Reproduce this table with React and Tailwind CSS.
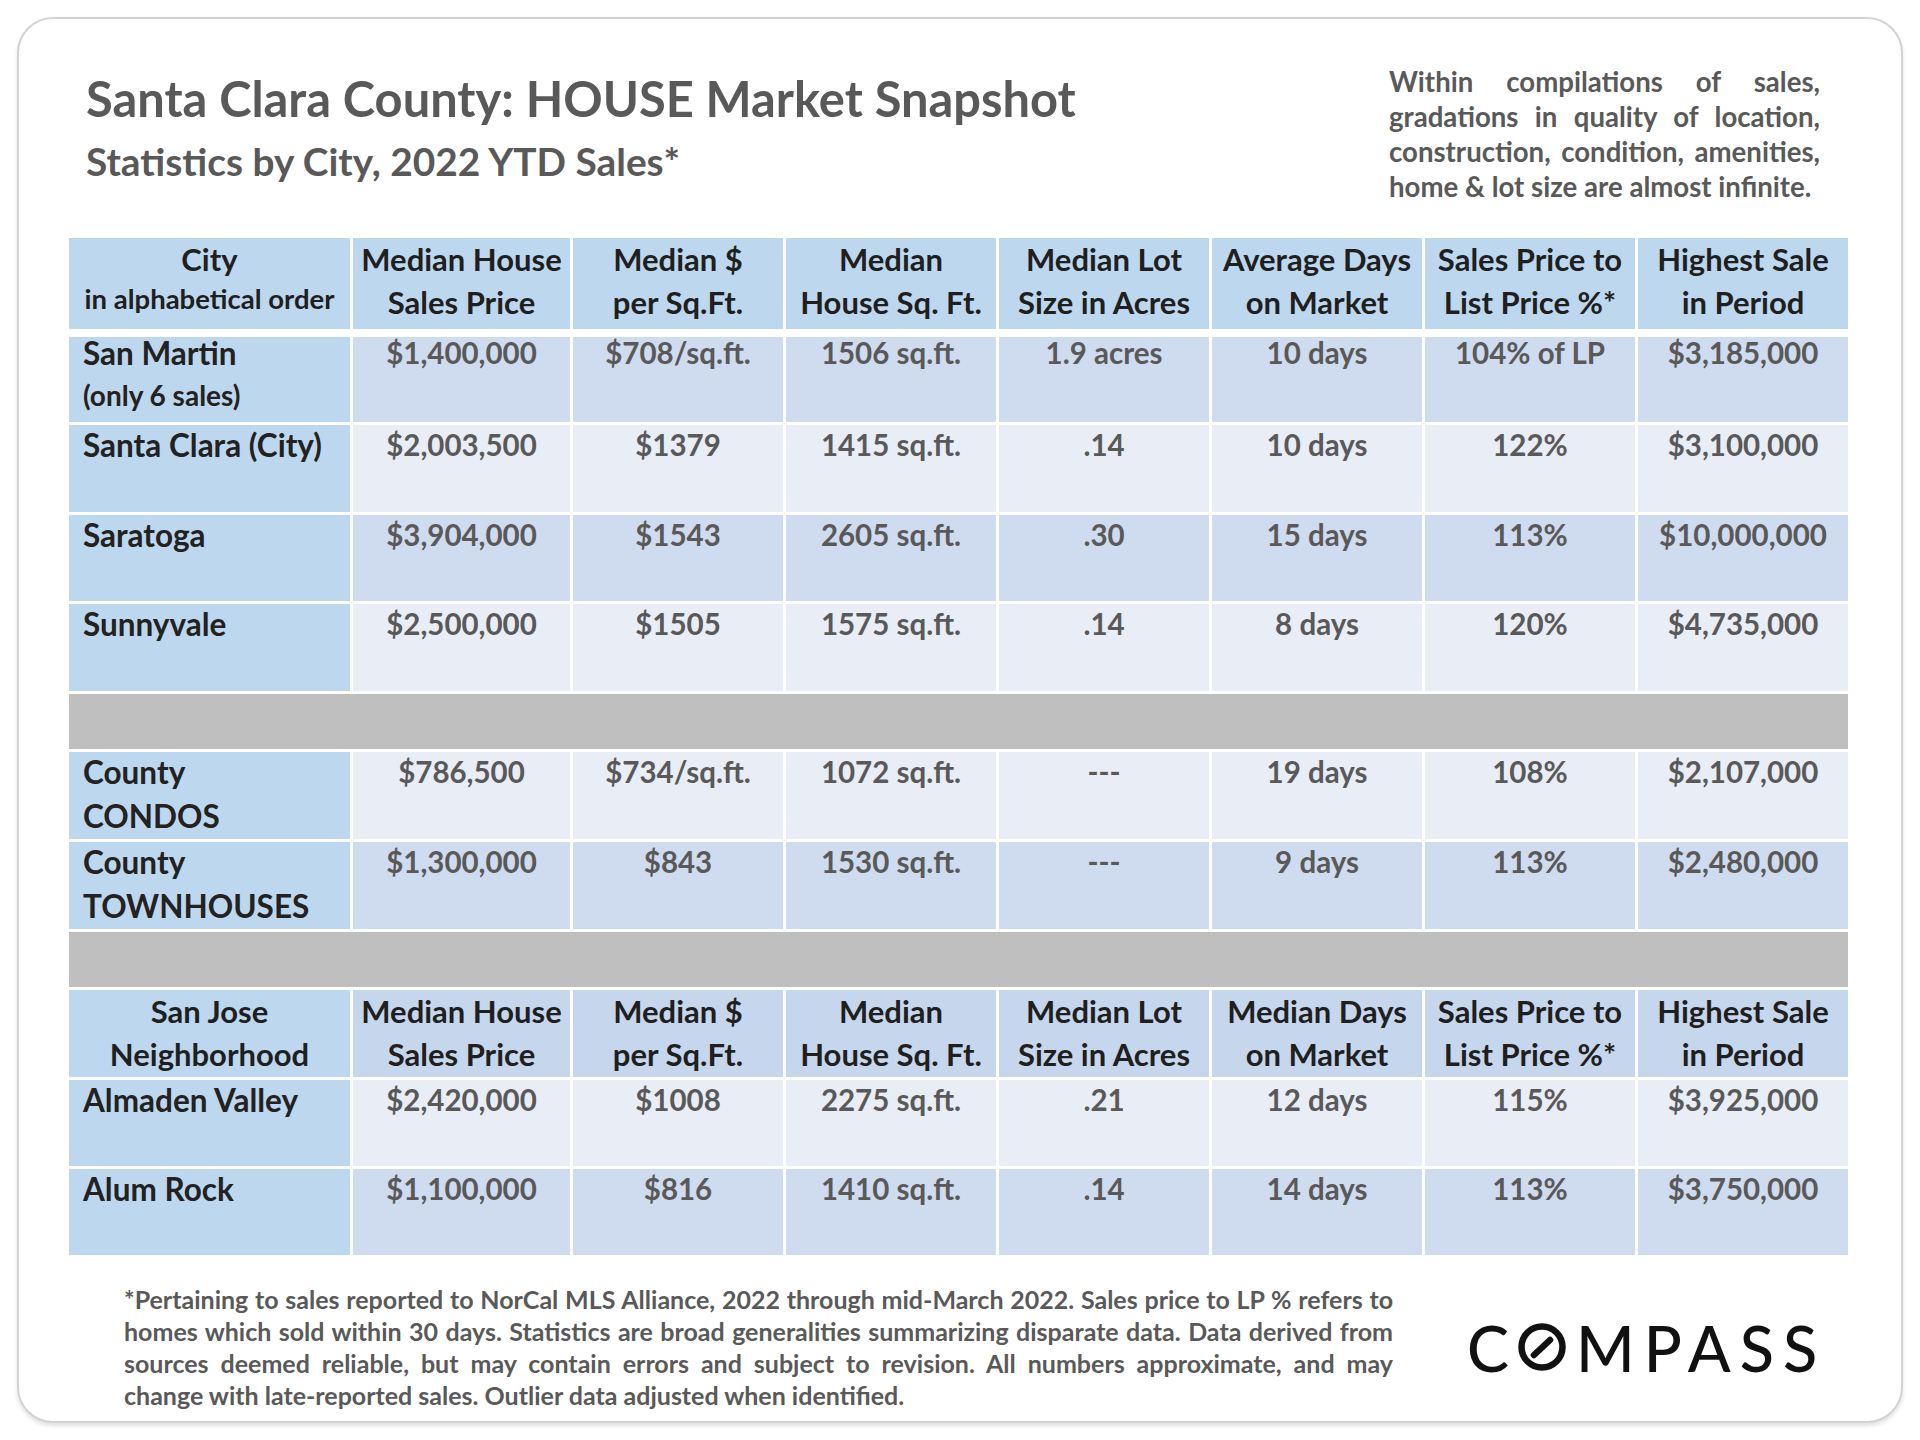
import React from 'react';

const DARK = 'bg-[#cfdbee]';
const LIGHT = 'bg-[#e8edf6]';

const cityHead = [
  ['Median House', 'Sales Price'],
  ['Median $', 'per Sq.Ft.'],
  ['Median', 'House Sq. Ft.'],
  ['Median Lot', 'Size in Acres'],
  ['Average Days', 'on Market'],
  ['Sales Price to', 'List Price %*'],
  ['Highest Sale', 'in Period'],
];

const sjHead = cityHead.map((h, i) => (i === 4 ? ['Median Days', 'on Market'] : h));

const cityRows = [
  { name: ['San Martin'], sub: '(only 6 sales)', band: DARK, h: 'h-[85px]', top: '-mt-[6px]', vals: ['$1,400,000', '$708/sq.ft.', '1506 sq.ft.', '1.9 acres', '10 days', '104% of LP', '$3,185,000'] },
  { name: ['Santa Clara (City)'], band: LIGHT, h: 'h-[87px]', vals: ['$2,003,500', '$1379', '1415 sq.ft.', '.14', '10 days', '122%', '$3,100,000'] },
  { name: ['Saratoga'], band: DARK, h: 'h-[86px]', vals: ['$3,904,000', '$1543', '2605 sq.ft.', '.30', '15 days', '113%', '$10,000,000'] },
  { name: ['Sunnyvale'], band: LIGHT, h: 'h-[87px]', vals: ['$2,500,000', '$1505', '1575 sq.ft.', '.14', '8 days', '120%', '$4,735,000'] },
];

const countyRows = [
  { name: ['County', 'CONDOS'], band: LIGHT, h: 'h-[87px]', vals: ['$786,500', '$734/sq.ft.', '1072 sq.ft.', '---', '19 days', '108%', '$2,107,000'] },
  { name: ['County', 'TOWNHOUSES'], band: DARK, h: 'h-[87px]', vals: ['$1,300,000', '$843', '1530 sq.ft.', '---', '9 days', '113%', '$2,480,000'] },
];

const sjRows = [
  { name: ['Almaden Valley'], band: LIGHT, h: 'h-[86px]', vals: ['$2,420,000', '$1008', '2275 sq.ft.', '.21', '12 days', '115%', '$3,925,000'] },
  { name: ['Alum Rock'], band: DARK, h: 'h-[86px]', vals: ['$1,100,000', '$816', '1410 sq.ft.', '.14', '14 days', '113%', '$3,750,000'] },
];

const noteLines = [
  'Within compilations of sales,',
  'gradations in quality of location,',
  'construction, condition, amenities,',
  'home & lot size are almost infinite.',
];

const footLines = [
  '*Pertaining to sales reported to NorCal MLS Alliance, 2022 through mid-March 2022. Sales price to LP % refers to',
  'homes which sold within 30 days. Statistics are broad generalities summarizing disparate data. Data derived from',
  'sources deemed reliable, but may contain errors and subject to revision. All numbers approximate, and may',
  'change with late-reported sales. Outlier data adjusted when identified.',
];

// each line is laid out on its own; all but the last are spread to the full width
const JustifiedLines = ({ lines, className }) => (
  <div className={className}>
    {lines.map((l, i) => (
      <div key={i} className={i < lines.length - 1 ? 'whitespace-nowrap [text-align-last:justify]' : 'whitespace-nowrap'}>
        {l}
      </div>
    ))}
  </div>
);

const HeaderRow = ({ first, cols, tint, h }) => (
  <>
    <div className={`bg-[#bdd7ee] ${h} text-center text-[#1f1f1f] text-[31px] leading-[43px]`}>
      {first}
    </div>
    {cols.map((c) => (
      <div key={c[0] + c[1]} className={`${tint} ${h} text-center text-[#1f1f1f] text-[31px] leading-[43px] whitespace-nowrap`}>
        <div>{c[0]}</div>
        <div>{c[1]}</div>
      </div>
    ))}
  </>
);

const DataRow = ({ row }) => {
  const top = row.top || '-mt-[2px]';
  return (
    <>
      <div className={`bg-[#bdd7ee] ${row.h} pl-[14px] text-[#222222] text-[31.5px] leading-[44px]`}>
        <div className={top}>
          {row.name.map((n) => <div key={n}>{n}</div>)}
          {row.sub && <div className="text-[28px] leading-[40px]">{row.sub}</div>}
        </div>
      </div>
      {row.vals.map((v, i) => (
        <div key={i} className={`${row.band} ${row.h} text-center text-[#595959] text-[29.5px] leading-[43px]`}>
          <div className={top}>{v}</div>
        </div>
      ))}
    </>
  );
};

const GrayBar = () => <div className="col-span-8 h-[55px] bg-[#bfbfbf]" />;

const CompassLogo = () => (
  <div className="flex items-center text-[#111111] text-[63px] leading-none font-medium tracking-[9px]">
    <span>C</span>
    <svg width="48" height="48" viewBox="0 0 48 48" className="mr-[10px]">
      <circle cx="24" cy="24" r="20.5" fill="none" stroke="#111111" strokeWidth="6.5" />
      <line x1="16" y1="32" x2="32" y2="17" stroke="#111111" strokeWidth="6.5" strokeLinecap="round" />
    </svg>
    <span>MPASS</span>
  </div>
);

export default function App() {
  return (
    <div className="w-[1920px] h-[1440px] bg-white pt-[17px] font-[Lato,'Liberation_Sans',sans-serif] font-bold">
      <div className="ml-[17px] w-[1886px] h-[1406px] rounded-[36px] border-2 border-[#d3d3d3] shadow-[0_3px_4px_rgba(0,0,0,0.12)] bg-white">
        {/* title block */}
        <div className="h-[219px] flex justify-between">
          <div className="ml-[67px] mt-[50px] text-[#595959]">
            <h1 className="text-[48.8px] leading-[1.2]">Santa Clara County: HOUSE Market Snapshot</h1>
            <h2 className="mt-[10px] text-[38.8px] leading-[1.2]">Statistics by City, 2022 YTD Sales*</h2>
          </div>
          <JustifiedLines
            lines={noteLines}
            className="mr-[81px] mt-[45px] w-[431px] text-[27.6px] leading-[35px] text-[#595959]"
          />
        </div>

        {/* table */}
        <div className="ml-[50px] w-[1779px] grid grid-cols-[281px_217px_210px_210px_210px_210px_210px_210px] gap-[3px]">
          <HeaderRow
            h="h-[91px]"
            tint="bg-[#bdd7ee]"
            cols={cityHead}
            first={
              <>
                <div>City</div>
                <div className="text-[27.5px] leading-[36px]">in alphabetical order</div>
              </>
            }
          />
          <div className="col-span-8 h-[2px]" />
          {cityRows.map((r) => <DataRow key={r.name.join()} row={r} />)}
          <GrayBar />
          {countyRows.map((r) => <DataRow key={r.name.join()} row={r} />)}
          <GrayBar />
          <HeaderRow
            h="h-[87px]"
            tint="bg-[#c6d6ec]"
            cols={sjHead}
            first={
              <>
                <div>San Jose</div>
                <div>Neighborhood</div>
              </>
            }
          />
          {sjRows.map((r) => <DataRow key={r.name.join()} row={r} />)}
        </div>

        {/* footnote */}
        <div className="mt-[28px] flex items-center">
          <JustifiedLines
            lines={footLines}
            className="ml-[105px] w-[1269px] text-[25px] leading-[32px] text-[#595959]"
          />
          <div className="ml-[74px]">
            <CompassLogo />
          </div>
        </div>
      </div>
    </div>
  );
}
